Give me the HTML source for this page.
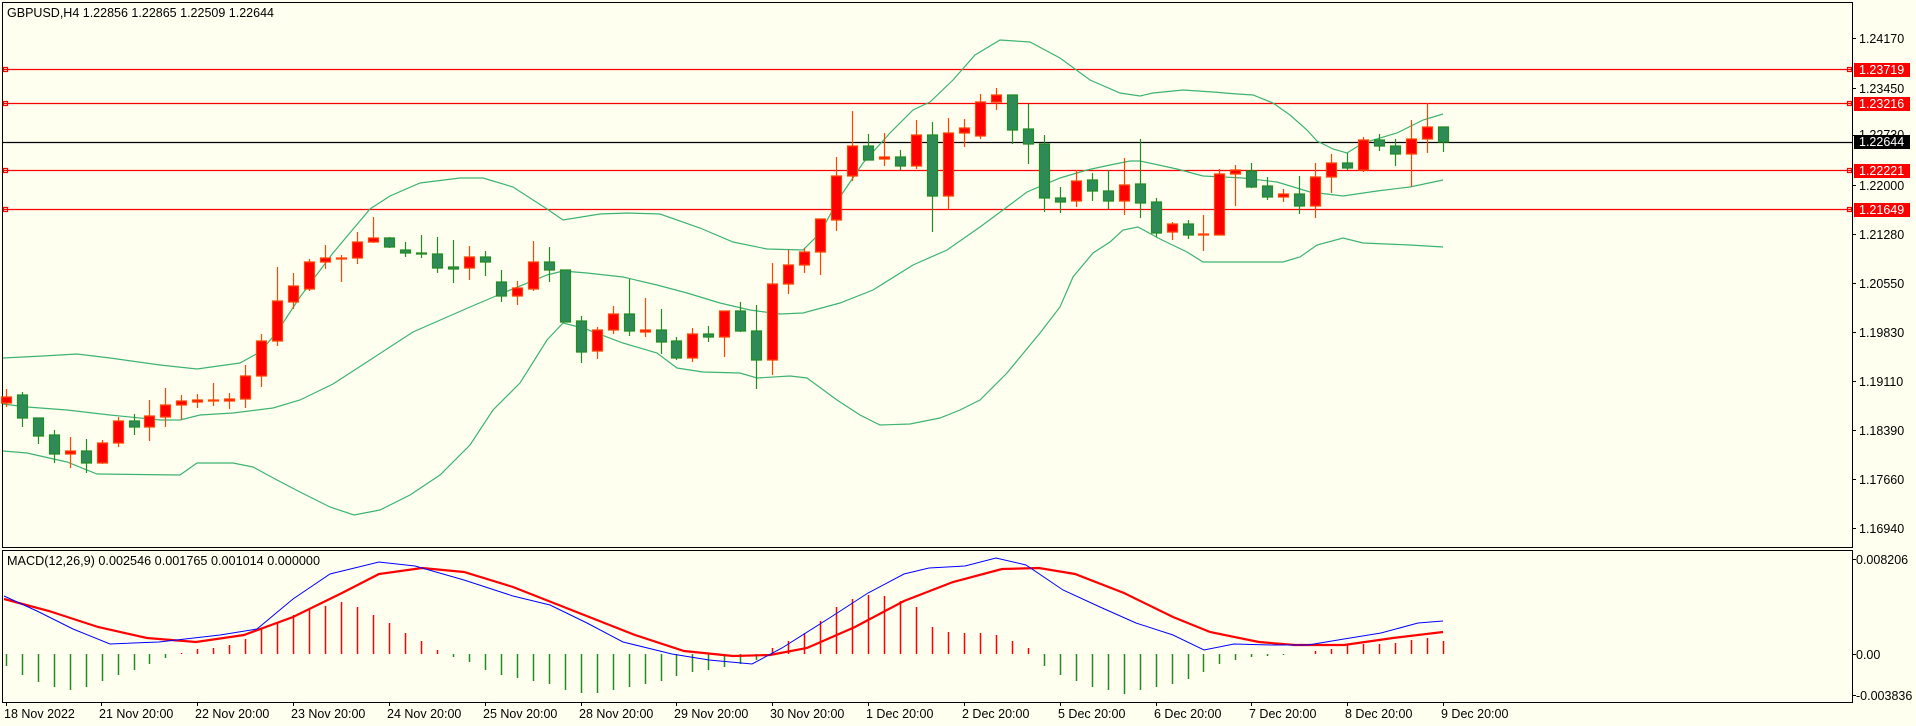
<!DOCTYPE html>
<html><head><meta charset="utf-8"><style>
html,body{margin:0;padding:0;background:#fffff0;}
svg{display:block;font-family:"Liberation Sans",Tahoma,sans-serif;font-size:12.5px;}
</style></head><body>
<svg width="1916" height="726" viewBox="0 0 1916 726" xmlns="http://www.w3.org/2000/svg">
<rect width="1916" height="726" fill="#fffff0"/>
<path d="M2.5 2.5H1852.5V547.5H2.5Z M2.5 550.5H1852.5V702.5H2.5Z" fill="none" stroke="#000" stroke-width="1"/>
<g stroke="#ff0000" stroke-width="1.2" fill="none">
<path d="M3 69.5H1852M3 103.5H1852M3 170.5H1852M3 209.5H1852"/>
<path d="M3.5 67.5h4v4h-4zM3.5 101.5h4v4h-4zM3.5 168.5h4v4h-4zM3.5 207.5h4v4h-4zM1847.5 67.5h4v4h-4zM1847.5 101.5h4v4h-4zM1847.5 168.5h4v4h-4zM1847.5 207.5h4v4h-4z"/>
</g>
<path d="M3 142.5H1852" stroke="#000" stroke-width="1.3"/>
<g fill="none" stroke="#3cb371" stroke-width="1.2">
<polyline points="3,358 43,356 77,354 110,358 160,365 197,369 240,363 260,352 277,332 300,297 333,253 370,209 390,196 420,183 460,178 483,178 513,187 547,209 563,220 600,214 627,213 660,214 700,228 733,242 767,249 803,250 820,233 840,197 863,163 890,133 913,110 930,102 953,80 975,55 1000,40 1030,42 1060,58 1090,80 1120,93 1140,96 1153,93 1183,90 1213,92 1237,94 1253,95 1273,103 1290,115 1307,130 1317,141 1333,149 1347,153 1363,143 1397,133 1423,120 1443,114"/>
<polyline points="3,404 27,407 67,410 110,415 160,420 180,420 200,415 233,413 273,408 300,400 333,384 370,360 413,332 470,307 503,293 547,275 563,271 587,273 623,277 657,285 687,293 720,303 750,310 780,314 803,313 840,303 873,290 913,265 947,250 980,227 1003,210 1027,192 1060,178 1087,170 1110,165 1130,161 1140,161 1177,169 1203,176 1243,178 1277,182 1310,192 1343,196 1377,191 1410,187 1443,180"/>
<polyline points="3,451 27,453 67,462 97,474 180,475 197,463 233,463 253,467 277,480 300,492 330,507 354,515 380,510 410,495 440,475 470,445 493,410 520,383 547,340 563,323 583,328 623,343 657,353 677,368 703,372 740,373 757,378 790,376 807,378 837,400 860,415 880,425 910,424 940,418 960,410 980,400 1007,373 1040,333 1060,307 1073,277 1093,253 1110,242 1123,230 1138,227 1160,239 1187,252 1203,262 1283,262 1300,257 1317,245 1343,238 1363,243 1410,245 1443,247"/>
</g>
<path fill="none" stroke="#ff4500" stroke-width="1.2" d="M6.5 389V407M70.5 437V468M102.5 440V464M118.5 417V447M149.5 400V441M165.5 388V427M181.5 395V420M197.5 394V408M213.5 383V406M229.5 393V409M245.5 365V408M261.5 334V387M277.5 267V346M293.5 273V309M309.5 259V291M325.5 245V269M341.5 255V282M357.5 232V264M373.5 217V243M469.5 246V280M517.5 281V305M533.5 241V291M597.5 327V359M613.5 306V334M645.5 298V337M692.5 328V362M724.5 311V357M772.5 263V375M788.5 250V294M804.5 248V273M820.5 219V275M836.5 157V231M852.5 111V181M884.5 133V166M916.5 120V169M948.5 118V209M964.5 119V147M980.5 94V139M996.5 88V110M1076.5 170V207M1124.5 158V215M1172.5 222V240M1203.5 215V251M1219.5 169V235M1235.5 165V206M1283.5 189V202M1315.5 163V218M1331.5 154V193M1363.5 137V172M1411.5 120V187M1427.5 103V153"/>
<path fill="#ff0000" stroke="#ff4500" stroke-width="1.2" d="M1.5 397h10v6h-10zM65.5 451h10v3h-10zM97.5 443h10v20h-10zM113.5 421h10v22h-10zM144.5 416h10v11h-10zM160.5 405h10v12h-10zM176.5 401h10v4h-10zM192.5 400h10v2h-10zM208.5 400h10v1h-10zM224.5 399h10v2h-10zM240.5 376h10v23h-10zM256.5 341h10v35h-10zM272.5 301h10v40h-10zM288.5 286h10v16h-10zM304.5 262h10v27h-10zM320.5 258h10v4h-10zM336.5 258h10v1h-10zM352.5 242h10v16h-10zM368.5 238h10v4h-10zM464.5 257h10v11h-10zM512.5 288h10v8h-10zM528.5 262h10v27h-10zM592.5 330h10v21h-10zM608.5 314h10v16h-10zM640.5 330h10v2h-10zM687.5 334h10v24h-10zM719.5 311h10v26h-10zM767.5 284h10v76h-10zM783.5 265h10v19h-10zM799.5 252h10v13h-10zM815.5 219h10v33h-10zM831.5 176h10v44h-10zM847.5 146h10v30h-10zM879.5 157h10v2h-10zM911.5 135h10v31h-10zM943.5 133h10v63h-10zM959.5 128h10v5h-10zM975.5 102h10v34h-10zM991.5 95h10v7h-10zM1071.5 181h10v20h-10zM1119.5 185h10v16h-10zM1167.5 224h10v8h-10zM1198.5 234h10v1h-10zM1214.5 174h10v61h-10zM1230.5 170h10v4h-10zM1278.5 194h10v3h-10zM1310.5 177h10v29h-10zM1326.5 163h10v14h-10zM1358.5 140h10v30h-10zM1406.5 139h10v15h-10zM1422.5 127h10v12h-10z"/>
<path fill="none" stroke="#228b22" stroke-width="1.2" d="M22.5 392V427M38.5 418V444M54.5 430V463M86.5 439V473M134.5 414V435M389.5 237V248M405.5 242V257M421.5 235V258M437.5 237V273M453.5 240V283M485.5 251V276M501.5 270V302M549.5 247V282M565.5 270V322M581.5 316V363M629.5 279V336M661.5 309V354M676.5 337V360M708.5 326V342M740.5 302V332M756.5 305V389M868.5 134V160M900.5 150V170M932.5 122V232M1012.5 95V144M1028.5 104V164M1044.5 135V212M1060.5 187V213M1092.5 173V201M1108.5 170V209M1140.5 139V218M1156.5 198V237M1188.5 220V239M1251.5 163V188M1267.5 177V200M1299.5 176V214M1347.5 153V170M1379.5 134V151M1395.5 139V166M1443.5 127V152"/>
<path fill="#2e8b57" stroke="#228b22" stroke-width="1.2" d="M17.5 395h10v23h-10zM33.5 418h10v18h-10zM49.5 435h10v19h-10zM81.5 451h10v12h-10zM129.5 421h10v6h-10zM384.5 238h10v9h-10zM400.5 250h10v3h-10zM416.5 253h10v1h-10zM432.5 254h10v14h-10zM448.5 267h10v2h-10zM480.5 257h10v5h-10zM496.5 282h10v14h-10zM544.5 262h10v8h-10zM560.5 270h10v52h-10zM576.5 321h10v31h-10zM624.5 314h10v17h-10zM656.5 330h10v12h-10zM671.5 341h10v17h-10zM703.5 334h10v3h-10zM735.5 311h10v20h-10zM751.5 331h10v29h-10zM863.5 146h10v14h-10zM895.5 157h10v9h-10zM927.5 135h10v61h-10zM1007.5 95h10v35h-10zM1023.5 129h10v15h-10zM1039.5 144h10v54h-10zM1055.5 198h10v4h-10zM1087.5 180h10v11h-10zM1103.5 191h10v10h-10zM1135.5 184h10v19h-10zM1151.5 202h10v31h-10zM1183.5 224h10v11h-10zM1246.5 171h10v16h-10zM1262.5 186h10v11h-10zM1294.5 194h10v12h-10zM1342.5 163h10v5h-10zM1374.5 140h10v6h-10zM1390.5 146h10v8h-10zM1438.5 127h10v15h-10z"/>
<path fill="none" stroke="#228b22" stroke-width="1.5" d="M6.5 654V666M22.5 654V675M38.5 654V682M54.5 654V687M70.5 654V690M86.5 654V687M102.5 654V681M118.5 654V675M134.5 654V670M149.5 654V664M165.5 654V658M453.5 654V657M469.5 654V662M485.5 654V670M501.5 654V675M517.5 654V678M533.5 654V681M549.5 654V684M565.5 654V690M581.5 654V693M597.5 654V693M613.5 654V690M629.5 654V687M645.5 654V684M661.5 654V681M676.5 654V676M692.5 654V672M708.5 654V670M724.5 654V667M740.5 654V664M756.5 654V660M1044.5 654V666M1060.5 654V675M1076.5 654V681M1092.5 654V687M1108.5 654V690M1124.5 654V694M1140.5 654V690M1156.5 654V687M1172.5 654V684M1188.5 654V679M1203.5 654V672M1219.5 654V664M1235.5 654V660M1251.5 654V657M1267.5 654V656M1283.5 654V655"/>
<path fill="none" stroke="#ff0000" stroke-width="1.5" d="M181.5 654V653M197.5 654V649M213.5 654V648M229.5 654V645M245.5 654V639M261.5 654V629M277.5 654V622M293.5 654V615M309.5 654V610M325.5 654V606M341.5 654V602M357.5 654V607M373.5 654V615M389.5 654V623M405.5 654V633M421.5 654V641M437.5 654V650M772.5 654V648M788.5 654V641M804.5 654V633M820.5 654V621M836.5 654V607M852.5 654V599M868.5 654V595M884.5 654V596M900.5 654V601M916.5 654V607M932.5 654V627M948.5 654V632M964.5 654V633M980.5 654V633M996.5 654V635M1012.5 654V641M1028.5 654V648M1315.5 654V651M1331.5 654V649M1347.5 654V645M1363.5 654V644M1379.5 654V644M1395.5 654V643M1411.5 654V640M1427.5 654V638M1443.5 654V641"/>
<polyline fill="none" stroke="#ff0000" stroke-width="2.2" points="4,599 49,611 98,627 147,638 196,642 244,635 293,617 342,593 379,574 422,568 464,572 513,587 574,611 635,635 684,651 733,656 770,655 807,648 855,627 904,601 953,582 1002,569 1039,568 1075,574 1124,593 1173,617 1210,632 1259,642 1295,645 1344,645 1393,638 1443,632"/>
<polyline fill="none" stroke="#0000ff" stroke-width="1" points="4,596 37,611 73,629 110,644 159,642 220,635 257,629 293,599 330,574 379,562 415,566 464,580 513,596 550,605 587,623 623,642 672,654 709,660 752,664 782,648 831,617 868,593 904,574 929,568 965,566 996,558 1026,565 1063,590 1100,607 1136,623 1173,635 1204,650 1234,644 1271,645 1308,645 1344,639 1381,633 1418,623 1443,621"/>
<path stroke="#000" stroke-width="1" d="M1852 38.5h4M1852 88.5h4M1852 135.5h4M1852 185.5h4M1852 234.5h4M1852 283.5h4M1852 332.5h4M1852 381.5h4M1852 430.5h4M1852 479.5h4M1852 528.5h4M1852 559.5h4M1852 654.5h4M1852 695.5h4"/>
<g fill="#000">
<text x="1859" y="43">1.24170</text>
<text x="1859" y="93">1.23450</text>
<text x="1859" y="139">1.22730</text>
<text x="1859" y="190">1.22000</text>
<text x="1859" y="239">1.21280</text>
<text x="1859" y="288">1.20550</text>
<text x="1859" y="337">1.19830</text>
<text x="1859" y="386">1.19110</text>
<text x="1859" y="435">1.18390</text>
<text x="1859" y="484">1.17660</text>
<text x="1859" y="533">1.16940</text>
<text x="1856" y="564">0.008206</text>
<text x="1856" y="659">0.00</text>
<text x="1856" y="700">-0.003836</text>
</g>
<rect x="1854" y="63" width="56" height="14" fill="#ff0000"/>
<rect x="1854" y="97" width="56" height="14" fill="#ff0000"/>
<rect x="1854" y="135" width="56" height="14" fill="#000"/>
<rect x="1854" y="164" width="56" height="14" fill="#ff0000"/>
<rect x="1854" y="203" width="56" height="14" fill="#ff0000"/>
<g fill="#fff">
<text x="1859" y="74">1.23719</text>
<text x="1859" y="108">1.23216</text>
<text x="1859" y="146">1.22644</text>
<text x="1859" y="175">1.22221</text>
<text x="1859" y="214">1.21649</text>
</g>
<text x="7" y="17" fill="#000" textLength="267" lengthAdjust="spacingAndGlyphs">GBPUSD,H4  1.22856 1.22865 1.22509 1.22644</text>
<text x="7" y="565" fill="#000" textLength="313" lengthAdjust="spacingAndGlyphs">MACD(12,26,9) 0.002546 0.001765 0.001014 0.000000</text>
<path stroke="#000" stroke-width="1" d="M6.5 702v4M101.5 702v4M197.5 702v4M293.5 702v4M389.5 702v4M485.5 702v4M581.5 702v4M676.5 702v4M772.5 702v4M868.5 702v4M964.5 702v4M1060.5 702v4M1156.5 702v4M1251.5 702v4M1347.5 702v4M1443.5 702v4"/>
<g fill="#000">
<text x="4" y="718">18 Nov 2022</text>
<text x="99" y="718">21 Nov 20:00</text>
<text x="195" y="718">22 Nov 20:00</text>
<text x="291" y="718">23 Nov 20:00</text>
<text x="387" y="718">24 Nov 20:00</text>
<text x="483" y="718">25 Nov 20:00</text>
<text x="579" y="718">28 Nov 20:00</text>
<text x="674" y="718">29 Nov 20:00</text>
<text x="770" y="718">30 Nov 20:00</text>
<text x="866" y="718">1 Dec 20:00</text>
<text x="962" y="718">2 Dec 20:00</text>
<text x="1058" y="718">5 Dec 20:00</text>
<text x="1154" y="718">6 Dec 20:00</text>
<text x="1249" y="718">7 Dec 20:00</text>
<text x="1345" y="718">8 Dec 20:00</text>
<text x="1441" y="718">9 Dec 20:00</text>
</g>
</svg>
</body></html>
